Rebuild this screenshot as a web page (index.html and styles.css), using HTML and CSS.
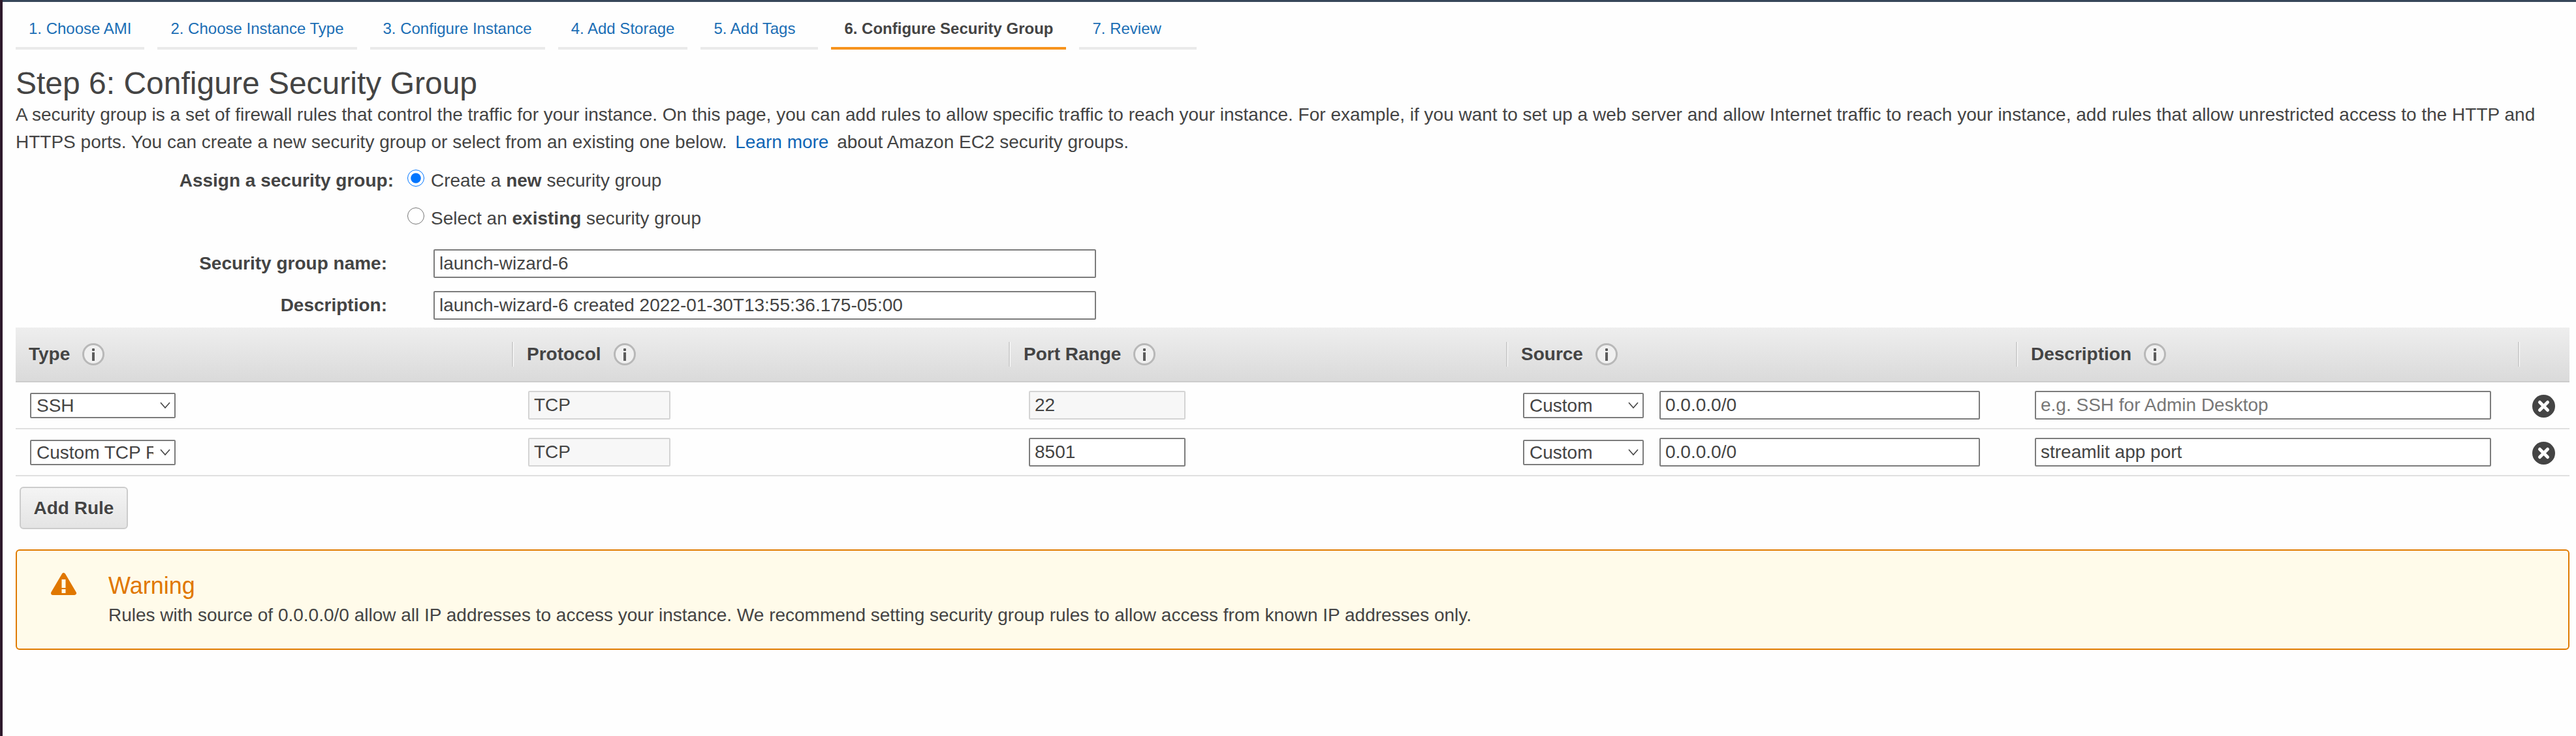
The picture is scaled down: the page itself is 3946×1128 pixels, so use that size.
FILE: index.html
```html
<!DOCTYPE html>
<html lang="en">
<head>
<meta charset="utf-8">
<title>Step 6: Configure Security Group</title>
<link rel="stylesheet" href="styles.css">
</head>
<body>
<svg class="sprites" aria-hidden="true">
  <symbol id="info" viewBox="0 0 34 34"><circle cx="17" cy="17" r="15.5" fill="#f0f0f0" stroke="#b8b8b8" stroke-width="3"/><rect x="15" y="8" width="4" height="4" rx="1" fill="#5c5c5c"/><rect x="15" y="14" width="4" height="13" fill="#5c5c5c"/></symbol>
  <symbol id="chevron" viewBox="0 0 16 10"><path d="M1 1l7 8 7-8" fill="none" stroke="#444" stroke-width="1.6"/></symbol>
  <symbol id="remove" viewBox="0 0 35 35"><circle cx="17.5" cy="17.5" r="17.5" fill="#444"/><path d="M11.5 11.5l12 12M23.5 11.5l-12 12" stroke="#fff" stroke-width="5" stroke-linecap="round"/></symbol>
</svg>
<div class="topbar"></div>
<main class="page">
  <nav class="tabs">
    <a class="tab">1. Choose AMI</a>
    <a class="tab">2. Choose Instance Type</a>
    <a class="tab">3. Configure Instance</a>
    <a class="tab">4. Add Storage</a>
    <a class="tab">5. Add Tags</a>
    <a class="tab tab-active">6. Configure Security Group</a>
    <a class="tab">7. Review</a>
  </nav>
  <h1 class="title">Step 6: Configure Security Group</h1>
  <p class="intro">A security group is a set of firewall rules that control the traffic for your instance. On this page, you can add rules to allow specific traffic to reach your instance. For example, if you want to set up a web server and allow Internet traffic to reach your instance, add rules that allow unrestricted access to the HTTP and HTTPS ports. You can create a new security group or select from an existing one below. <a class="link">Learn more</a> about Amazon EC2 security groups.</p>

  <section class="assign">
    <div class="assign-label">Assign a security group:</div>
    <div class="radios">
      <label class="radio"><input type="radio" name="sg" checked><span>Create a <b>new</b> security group</span></label>
      <label class="radio"><input type="radio" name="sg"><span>Select an <b>existing</b> security group</span></label>
    </div>
  </section>

  <section class="fields">
    <label class="field-label">Security group name:</label>
    <input class="input input-name" type="text" value="launch-wizard-6">
    <label class="field-label">Description:</label>
    <input class="input input-name" type="text" value="launch-wizard-6 created 2022-01-30T13:55:36.175-05:00">
  </section>

  <section class="rules">
    <div class="grid head-row">
      <div class="th first">Type <svg class="info"><use href="#info"/></svg></div>
      <div class="th">Protocol <svg class="info"><use href="#info"/></svg></div>
      <div class="th">Port Range <svg class="info"><use href="#info"/></svg></div>
      <div class="th">Source <svg class="info"><use href="#info"/></svg></div>
      <div class="th">Description <svg class="info"><use href="#info"/></svg></div>
      <div class="th"></div>
    </div>

    <div class="grid row">
      <div class="cell c-type"><span class="select-wrap"><select class="select select-type"><option>SSH</option></select><svg class="chev"><use href="#chevron"/></svg></span></div>
      <div class="cell c-proto"><input class="input input-proto" disabled value="TCP"></div>
      <div class="cell c-port"><input class="input input-port" disabled value="22"></div>
      <div class="cell c-source"><span class="select-wrap"><select class="select select-source"><option>Custom</option></select><svg class="chev"><use href="#chevron"/></svg></span><input class="input input-cidr" value="0.0.0.0/0"></div>
      <div class="cell c-desc"><input class="input input-desc" placeholder="e.g. SSH for Admin Desktop"></div>
      <div class="cell c-del"><svg class="del"><use href="#remove"/></svg></div>
    </div>

    <div class="grid row">
      <div class="cell c-type"><span class="select-wrap"><select class="select select-type"><option>Custom TCP Rule</option></select><svg class="chev"><use href="#chevron"/></svg></span></div>
      <div class="cell c-proto"><input class="input input-proto" disabled value="TCP"></div>
      <div class="cell c-port"><input class="input input-port" value="8501"></div>
      <div class="cell c-source"><span class="select-wrap"><select class="select select-source"><option>Custom</option></select><svg class="chev"><use href="#chevron"/></svg></span><input class="input input-cidr" value="0.0.0.0/0"></div>
      <div class="cell c-desc"><input class="input input-desc" value="streamlit app port"></div>
      <div class="cell c-del"><svg class="del"><use href="#remove"/></svg></div>
    </div>
  </section>

  <button class="add-rule" type="button">Add Rule</button>

  <section class="warning">
    <svg class="warn-icon" viewBox="0 0 39 36"><path d="M19.5 4 L36 32 L3 32 Z" fill="#e07700" stroke="#e07700" stroke-width="6" stroke-linejoin="round"/><rect x="16.5" y="11" width="6" height="13" fill="#fffbea"/><rect x="16.5" y="26" width="6" height="6" fill="#fffbea"/></svg>
    <div class="warn-body">
      <div class="warn-title">Warning</div>
      <div class="warn-text">Rules with source of 0.0.0.0/0 allow all IP addresses to access your instance. We recommend setting security group rules to allow access from known IP addresses only.</div>
    </div>
  </section>
</main>
</body>
</html>
```

FILE: styles.css
```css
* { box-sizing: border-box; }
html, body { height: 100%; }
body {
  margin: 0;
  border-left: 4px solid #2e1a2c;
  background: #fefefe;
  color: #444;
  font-family: "Liberation Sans", Arial, sans-serif;
  font-size: 28px;
  overflow: hidden;
}
.sprites { display: none; }
.topbar { height: 3px; background: #37475a; }
.page { padding: 0 10px 0 20px; }

.tabs { display: flex; gap: 20px; height: 73px; }
.tab {
  min-width: 180px;
  padding: 24px 20px 0;
  border-bottom: 4px solid #eaeaea;
  color: #1b6eb5;
  font-size: 24px;
  line-height: 34px;
  white-space: nowrap;
}
.tab-active { border-bottom-color: #f7941d; color: #444; font-weight: bold; }

.title { margin: 25px 0 0; font-size: 48px; font-weight: normal; line-height: 54px; color: #444; }
.intro { margin: 0; line-height: 42px; color: #444; }
.link { color: #0f65b5; margin: 0 5px; }

.assign { display: flex; margin-top: 18px; }
.assign-label { width: 579px; text-align: right; font-weight: bold; line-height: 40px; }
.radios { display: flex; flex-direction: column; gap: 18px; padding-left: 21px; }
.radio { display: flex; align-items: center; height: 40px; }
.radio input { width: 26px; height: 26px; margin: -8px 10px 0 0; }

.fields {
  display: grid;
  grid-template-columns: 569px 1015px;
  column-gap: 71px;
  row-gap: 20px;
  margin-top: 27px;
  align-items: center;
}
.field-label { text-align: right; font-weight: bold; }

.input {
  height: 44px;
  padding: 0 7px;
  border: 2px solid #7c7c7c;
  border-radius: 2px;
  background: #fff;
  color: #444;
  font: 28px "Liberation Sans", Arial, sans-serif;
}
.input::placeholder { color: #777; }
.input:disabled { background: #f7f7f7; border-color: #d4d4d4; color: #444; }
.input-name { width: 100%; }
.input-proto { width: 218px; }
.input-port { width: 240px; }
.input-cidr { width: 491px; margin-left: 24px; }
.input-desc { width: 699px; }

.select-wrap { position: relative; display: block; }
.select {
  display: block;
  appearance: none;
  height: 39px;
  padding: 0 32px 0 8px;
  border: 2px solid #7c7c7c;
  border-radius: 2px;
  background: #fff;
  color: #444;
  font: 28px "Liberation Sans", Arial, sans-serif;
}
.select-type { width: 223px; }
.select-source { width: 185px; }
.chev { position: absolute; right: 8px; top: 14px; width: 16px; height: 10px; pointer-events: none; }

.rules { margin-top: 12px; }
.grid { display: grid; grid-template-columns: 760px 761px 762px 781px 769px 79px; }
.head-row {
  height: 84px;
  align-items: center;
  background: linear-gradient(#eeeeee, #dadada);
  border-bottom: 2px solid #cccccc;
}
.th {
  display: flex;
  align-items: center;
  gap: 19px;
  height: 38px;
  padding-left: 21px;
  border-left: 2px solid #cfcfcf;
  box-shadow: inset 1px 0 0 #fff;
  font-weight: bold;
}
.th.first { border-left: 0; box-shadow: none; padding-left: 20px; }
.info { width: 34px; height: 34px; flex: none; }

.row { height: 72px; align-items: center; border-bottom: 2px solid #e0e0e0; }
.cell { display: flex; align-items: center; }
.c-type { padding-left: 22px; }
.c-proto { padding-left: 25px; }
.c-port { padding-left: 31px; }
.c-source { padding-left: 26px; }
.c-desc { padding-left: 29px; }
.c-del { padding-left: 22px; }
.del { width: 35px; height: 35px; margin-top: 2px; }

.add-rule {
  display: block;
  width: 166px;
  height: 65px;
  margin: 16px 0 0 6px;
  border: 2px solid #ccc;
  border-radius: 6px;
  background: linear-gradient(#f4f4f4, #e4e4e4);
  color: #444;
  font: bold 28px "Liberation Sans", Arial, sans-serif;
  text-shadow: 0 1px 0 #fff;
}

.warning {
  display: flex;
  gap: 49px;
  height: 154px;
  margin-top: 31px;
  padding: 32px 0 0 52px;
  border: 2px solid #e07b00;
  border-radius: 6px;
  background: #fffbea;
}
.warn-icon { width: 39px; height: 36px; flex: none; margin-top: 1px; }
.warn-title { color: #e07700; font-size: 36px; line-height: 44px; }
.warn-text { margin-top: 5px; line-height: 36px; color: #444; }
```
